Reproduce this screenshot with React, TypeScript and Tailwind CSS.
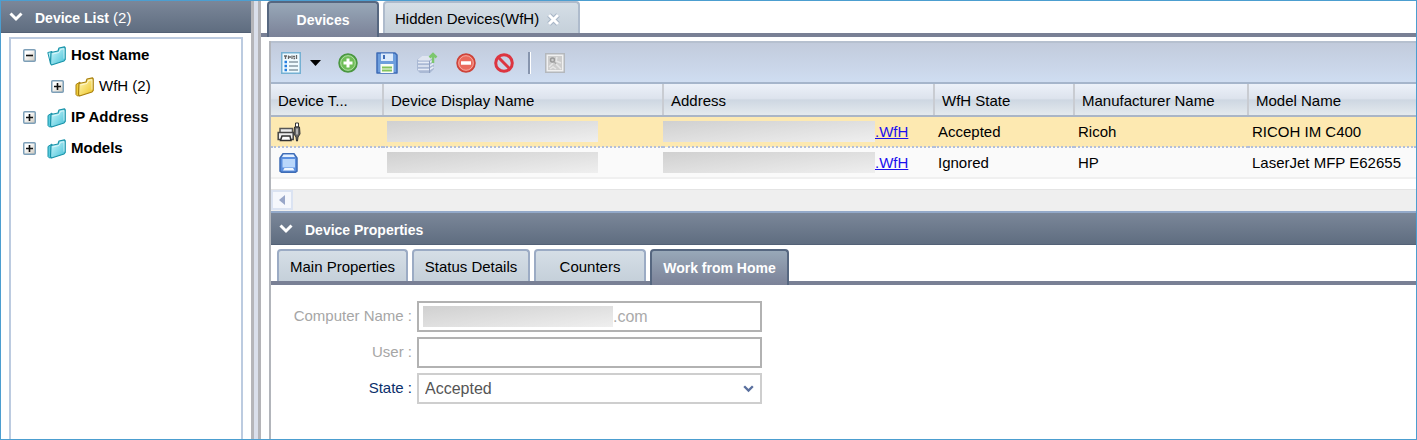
import React from "react";

const columns = [
  { label: "Device T...", width: "w-[112px]" },
  { label: "Device Display Name", width: "w-[280px]" },
  { label: "Address", width: "w-[271px]" },
  { label: "WfH State", width: "w-[140px]" },
  { label: "Manufacturer Name", width: "w-[174px]" },
  { label: "Model Name", width: "" },
];

const devices = [
  { type: "usb", state: "Accepted", maker: "Ricoh", model: "RICOH IM C400" },
  { type: "mfp", state: "Ignored", maker: "HP", model: "LaserJet MFP E62655" },
];

const Chevron = ({ className }: { className: string }) => (
  <svg viewBox="0 0 14 10" className={className} fill="none" stroke="currentColor" strokeWidth="3">
    <path d="M1.5 1.5 7 7l5.500-5.500" />
  </svg>
);

const Toggle = ({ open }: { open?: boolean }) => (
  <button aria-label={open ? "Collapse" : "Expand"} className="shrink-0">
    <svg width="13" height="13" viewBox="0 0 13 13" className="block">
      <defs>
        <linearGradient id="toggle" x2="1" y2="1">
          <stop offset=".3" stopColor="#fff" />
          <stop offset="1" stopColor="#cbc5b9" />
        </linearGradient>
      </defs>
      <rect x=".75" y=".75" width="11.500" height="11.500" rx="1" fill="url(#toggle)" stroke="#7d9fb8" strokeWidth="1.500" />
      <path d={open ? "M3 6.500h7" : "M3 6.500h7M6.500 3v7"} stroke="#111" strokeWidth="1.600" />
    </svg>
  </button>
);

const Folder = ({ kind }: { kind: "open" | "closed" | "yellow" }) => {
  const yellow = kind === "yellow";
  const edge = yellow ? "#a87f0c" : "#1792a8";
  return (
    <svg width="20" height="20" viewBox="0 0 20 20" className="shrink-0" strokeLinejoin="round">
      <defs>
        <linearGradient id={kind} x2="1" y2="1">
          <stop offset="0" stopColor={yellow ? "#fffbc4" : "#d8fbff"} />
          <stop offset="1" stopColor={yellow ? "#edc21c" : "#3fbfd6"} />
        </linearGradient>
      </defs>
      {kind === "open" ? (
        <path d="M.8 6.500 5 5.500v13l-1.500-.8z" fill="#b5f0f8" stroke={edge} />
      ) : (
        <path d="M1 7.500 5 5v13.500l-2.500.5L1 17.500z" fill={yellow ? "#f0ce3c" : "#5cccdf"} stroke={edge} />
      )}
      <path d="M4 6.500 11 5l1-3 5.500-1.200.7 1v11.700L17 15 4.500 19l-1-1.500z" fill={`url(#${kind})`} stroke={edge} strokeWidth="1.200" />
      <path d="M5.500 8 12 6.500l1.500-3 3.500-.8v10" fill="none" stroke="#fff" opacity=".6" />
    </svg>
  );
};

const ListIcon = () => (
  <svg width="20" height="22" viewBox="0 0 20 22">
    <rect x=".75" y=".75" width="18.500" height="20.500" fill="#eefaff" stroke="#75b0d2" strokeWidth="1.500" />
    <path d="M3 4h3M4.500 4v3M7.500 3.500v3.500M7 5h3M11 3.500v3.500M12 4.500h2M12.500 6.500h1.500M15.500 3v4" stroke="#666" strokeWidth="1.300" />
    <path d="M8 10h9M8 14h9M8 18h9" stroke="#8799a5" strokeWidth="1.500" />
    <path d="M3.500 10H6M3.500 14H6M3.500 18H6" stroke="#247ee0" strokeWidth="2.500" />
  </svg>
);

const AddIcon = () => (
  <svg width="20" height="20" viewBox="0 0 20 20">
    <circle cx="10" cy="10" r="9" fill="#5bb14b" stroke="#4a9640" strokeWidth="1.500" />
    <circle cx="10" cy="10" r="7.300" fill="#6fbe57" stroke="#b5dda8" />
    <path d="M10 5.500v9M5.500 10h9" stroke="#fff" strokeWidth="3" />
  </svg>
);

const SaveIcon = () => (
  <svg width="22" height="22" viewBox="0 0 22 22">
    <path d="M1 1h18l2 2v18H1z" fill="#6d9edd" stroke="#3e6bb5" strokeWidth="1.500" strokeLinejoin="round" />
    <path d="M5 1.500h12V9H5z" fill="#dceafb" />
    <path d="M8 3v4" stroke="#3e6bb5" strokeWidth="2" />
    <path d="M4.500 12h13v9h-13z" fill="#f9fdf4" />
    <path d="M6 15.500h10M6 18.500h10" stroke="#84c35c" strokeWidth="2" />
  </svg>
);

const UploadIcon = () => (
  <svg width="22" height="22" viewBox="0 0 22 22">
    <path d="M1 7.500 6 4h9l3 2v11l-4 4H4l-3-3z" fill="#aab9d4" />
    <path d="M1.500 7.500 6 4h8l3 2-4 2.500H3z" fill="#dfe5f0" />
    <path d="M2 10.500h11.500l4-2.500M2 14h11.500l4-2.500M2 17.500h11.500l4-2.500" fill="none" stroke="#e6ecf6" strokeWidth="1.500" />
    <path d="M13.500 9v12" stroke="#8f9fc0" />
    <path d="M17 11V2M13.500 5.500 17 2l3.500 3.500" fill="none" stroke="#7cc76e" strokeWidth="2.500" />
  </svg>
);

const RemoveIcon = () => (
  <svg width="20" height="20" viewBox="0 0 20 20">
    <circle cx="10" cy="10" r="9" fill="#e65449" stroke="#cc4339" strokeWidth="1.500" />
    <circle cx="10" cy="10" r="7.300" fill="#ea6a5c" stroke="#f5aca2" />
    <path d="M5 10h10" stroke="#fff" strokeWidth="3.500" />
  </svg>
);

const BlockIcon = () => (
  <svg width="20" height="20" viewBox="0 0 20 20" fill="none" stroke="#dd3540" strokeWidth="3">
    <circle cx="10" cy="10" r="8.300" />
    <path d="m4 4 12 12" />
  </svg>
);

const MapIcon = () => (
  <svg width="20" height="20" viewBox="0 0 20 20">
    <rect x=".75" y=".75" width="18.500" height="18.500" fill="#f0f0f0" stroke="#b4b8bd" strokeWidth="1.500" />
    <path d="M3 3h14v14H3z" fill="#cdcdcd" />
    <path d="m9 9 7 7M4 14l4-4M12 4l-1 4 5 2M5 16l3-2 3 2" fill="none" stroke="#e6e6e6" strokeWidth="1.500" />
    <circle cx="7.500" cy="7" r="2" fill="none" stroke="#999" strokeWidth="1.500" />
    <path d="m9 8.500 2 2.500" stroke="#aaa" strokeWidth="1.500" />
  </svg>
);

const DeviceIcon = ({ type }: { type: string }) =>
  type === "usb" ? (
    <svg width="24" height="20" viewBox="0 0 24 20" className="block">
      <path d="M3 6.500h12.500V12H3z" fill="#eee" stroke="#555" strokeWidth="1.500" />
      <path d="M1.200 10.500h15v7h-15z" fill="#eee" stroke="#444" strokeWidth="1.500" />
      <path d="M5 14h8l1 4.500H3.500z" fill="#fff" stroke="#333" strokeWidth="1.500" />
      <path d="M18.500 1h3v4h-3z" fill="#fff" stroke="#333" />
      <path d="M17.500 5h5l.5 7-2 3-.5 4h-1L19 15l-2-3z" fill="#666" stroke="#333" />
      <path d="M20 6.500v6" stroke="#ccc" strokeWidth="1.500" />
    </svg>
  ) : (
    <svg width="24" height="20" viewBox="0 0 24 20" className="block">
      <path d="M6 .8h11L20 5v13.200l-1.500 1h-14l-1.500-1V5z" fill="#5b8fdf" stroke="#3f6db6" strokeWidth="1.500" />
      <path d="M6.500 1.500h10l1.500 2.500H5z" fill="#e2efff" />
      <path d="M5.500 6H18v8.500H5.500z" fill="#b9d7fb" />
      <path d="M7.500 15h8.500l1.500 2.500H6z" fill="#f0f7ff" />
    </svg>
  );

// placeholder drawn over masked values
const Masked = ({ className }: { className: string }) => (
  <span className={`block h-[21px] shrink-0 bg-linear-to-br from-[#d0d0d0] to-[#efefef] ${className}`} />
);

const Tab = ({ label, active, className = "" }: { label: string; active?: boolean; className?: string }) => (
  <button
    role="tab"
    aria-selected={!!active}
    className={`whitespace-nowrap rounded-t border-2 border-b-0 text-center ${className} ${
      active
        ? "h-9 border-[#566780] bg-linear-to-b from-[#98a8b8] to-[#7b8298] text-[14px] font-bold text-white"
        : "h-8 border-[#9babc4] bg-linear-to-b from-[#d5dee6] to-[#c5d0da] pt-0.5 text-[15px]"
    }`}
  >
    {label}
  </button>
);

const PanelHeader = ({ title, count }: { title: string; count?: string }) => (
  <div className="flex h-8 shrink-0 items-center border-b border-[#536176] bg-linear-to-b from-[#7b8799] to-[#5f6d80] pt-1 text-white">
    <button aria-label={`Toggle ${title}`} className="mr-3 ml-2 pb-1">
      <Chevron className="block h-[10px] w-[14px]" />
    </button>
    <h2 className="text-[14px] font-bold">
      {title}
      {count && <span className="text-[15px] font-normal"> {count}</span>}
    </h2>
  </div>
);

const TreeRow = ({ label, kind, open, child }: { label: string; kind: "open" | "closed" | "yellow"; open?: boolean; child?: boolean }) => (
  <li className={`flex h-[31px] items-center text-[15px] ${child ? "pl-10" : "pl-3 font-bold"}`}>
    <Toggle open={open} />
    <span className="mr-1 ml-[11px] flex">
      <Folder kind={kind} />
    </span>
    {label}
  </li>
);

const Sidebar = () => (
  <aside className="flex w-[250px] shrink-0 flex-col">
    <PanelHeader title="Device List" count="(2)" />
    <ul className="mx-2 mt-1 flex-1 border-2 border-b-0 border-[#bccbe0] pt-px">
      <TreeRow label="Host Name" kind="open" open />
      <TreeRow label="WfH (2)" kind="yellow" child />
      <TreeRow label="IP Address" kind="closed" />
      <TreeRow label="Models" kind="closed" />
    </ul>
  </aside>
);

const Toolbar = () => (
  <div className="flex h-[43px] items-center border-y-2 border-t-[#b6c0cf] border-b-[#a5b5cb] bg-linear-to-b from-[#c2cbdc] to-[#cfddf1] pl-[10px]">
    <button aria-label="Views" className="flex items-center gap-[9px]">
      <ListIcon />
      <svg width="11" height="6" viewBox="0 0 11 6">
        <path d="M0 0h11L5.500 6z" fill="#000" />
      </svg>
    </button>
    <div className="ml-[17px] flex items-center gap-[18px]">
      <button aria-label="Add"><AddIcon /></button>
      <button aria-label="Save"><SaveIcon /></button>
      <button aria-label="Upload"><UploadIcon /></button>
      <button aria-label="Remove"><RemoveIcon /></button>
      <button aria-label="Block"><BlockIcon /></button>
    </div>
    <div className="mx-[14px] h-[22px] w-[3px] border-r border-l-2 border-r-white border-l-[#8795ae]" />
    <button aria-label="Map"><MapIcon /></button>
  </div>
);

const DeviceTable = () => (
  <div className="h-[105px] shrink-0 overflow-hidden bg-white">
    <table className="w-full table-fixed border-collapse text-left text-[15px] whitespace-nowrap">
      <thead>
        <tr className="h-8 bg-[linear-gradient(to_bottom,#ecf1f9,#dde3ed_45%,#ced7e2_50%,#e6ebef)]">
          {columns.map((c) => (
            <th key={c.label} className={`border-r-2 border-b-2 border-r-[#c9ccd2] border-b-[#aab5c6] p-0 pt-1 pl-[7px] font-normal last:border-r-0 ${c.width}`}>
              {c.label}
            </th>
          ))}
        </tr>
      </thead>
      <tbody>
        {devices.map((d) => (
          <tr key={d.model} className="h-[31px] border-b-2 border-[#f0f0f0] bg-[#fafafa] first:border-dotted first:border-[#b3bfd9] first:bg-[#fde9b1]">
            <td className="p-0 pl-[6px]">
              <DeviceIcon type={d.type} />
            </td>
            <td className="p-0 pl-1">
              <Masked className="w-[211px]" />
            </td>
            <td className="p-0">
              <div className="flex items-center">
                <Masked className="w-[212px]" />
                <a href="#" className="pt-0.5 text-[#1a10ee] underline">.WfH</a>
              </div>
            </td>
            <td className="p-0 pt-0.5 pl-1">{d.state}</td>
            <td className="p-0 pt-0.5 pl-1">{d.maker}</td>
            <td className="p-0 pt-0.5 pl-1">{d.model}</td>
          </tr>
        ))}
      </tbody>
    </table>
  </div>
);

const PropertiesForm = () => (
  <form className="grid grid-cols-[141px_345px] items-center gap-[5px] pt-4 text-[15px] text-[#a6a6a6]">
    <label htmlFor="computer" className="text-right">Computer Name :</label>
    <div className="flex h-[31px] items-center border-2 border-[#b2b2b2] pl-1">
      <Masked className="w-[190px]" />
      <input id="computer" readOnly value=".com" className="min-w-0 flex-1 text-[16px] text-[#aaa] outline-none" />
    </div>
    <label htmlFor="user" className="text-right">User :</label>
    <input id="user" readOnly className="h-[31px] border-2 border-[#b2b2b2] px-1 text-[16px] outline-none" />
    <label htmlFor="state" className="text-right text-[#0b2f6b]">State :</label>
    <div className="relative">
      <select id="state" defaultValue="Accepted" className="block h-[31px] w-full appearance-none border-2 border-[#cecece] bg-white px-[6px] text-[16px] text-[#555]">
        <option>Accepted</option>
        <option>Ignored</option>
      </select>
      <Chevron className="pointer-events-none absolute top-3 right-2 h-2 w-[11px] text-[#596f9e]" />
    </div>
  </form>
);

export default function App() {
  return (
    <div className="flex h-screen overflow-hidden border border-[#4c9ed0] bg-white font-['Liberation_Sans',Arial,sans-serif] text-black">
      <Sidebar />
      <div className="w-[10px] shrink-0 border-x-[3px] border-r-[#b4b4b8] border-l-[#b5b5b9] bg-[#dadfeb]" />
      <main className="flex min-w-0 flex-1 flex-col">
        <div role="tablist" className="flex h-9 shrink-0 items-start gap-1 border-b-4 border-[#798095] pl-[6px]">
          <Tab label="Devices" active className="w-28" />
          <div className="flex h-8 w-[197px] items-center gap-2 rounded-t border-2 border-b-0 border-[#aebbcc] bg-linear-to-b from-[#d5dee6] to-[#c5d0da] pt-0.5 pl-[10px] text-[15px]">
            <button role="tab" aria-selected={false} className="whitespace-nowrap">Hidden Devices(WfH)</button>
            <button aria-label="Close" className="text-white">
              <svg width="13" height="13" viewBox="0 0 13 13" className="block">
                <path d="m2 2 9 9M11 2l-9 9" stroke="#a6b4c6" strokeWidth="5" />
                <path d="m2 2 9 9M11 2l-9 9" stroke="#fff" strokeWidth="3" />
              </svg>
            </button>
          </div>
        </div>
        <div className="mt-1 ml-2 flex min-h-0 flex-1 flex-col border-l-2 border-[#b2b5bb]">
          <Toolbar />
          <DeviceTable />
          <div className="flex h-[22px] shrink-0 border-t border-[#e4e4e4] bg-[#efefef]">
            <button aria-label="Scroll left" className="flex h-5 w-[22px] items-center justify-center border-2 border-[#dbe3f2] bg-[#f5f7fc]">
              <svg width="6" height="10" viewBox="0 0 6 10">
                <path d="M6 0v10L0 5z" fill="#98a6c8" />
              </svg>
            </button>
          </div>
          <div className="h-[2px] shrink-0 bg-[#93a9c9]" />
          <PanelHeader title="Device Properties" />
          <div role="tablist" className="mt-1 flex h-9 shrink-0 items-start gap-1 border-b-4 border-[#798095] pl-[6px]">
            <Tab label="Main Properties" className="w-[131px]" />
            <Tab label="Status Details" className="w-[118px]" />
            <Tab label="Counters" className="w-28" />
            <Tab label="Work from Home" active className="w-[139px]" />
          </div>
          <PropertiesForm />
        </div>
      </main>
    </div>
  );
}
